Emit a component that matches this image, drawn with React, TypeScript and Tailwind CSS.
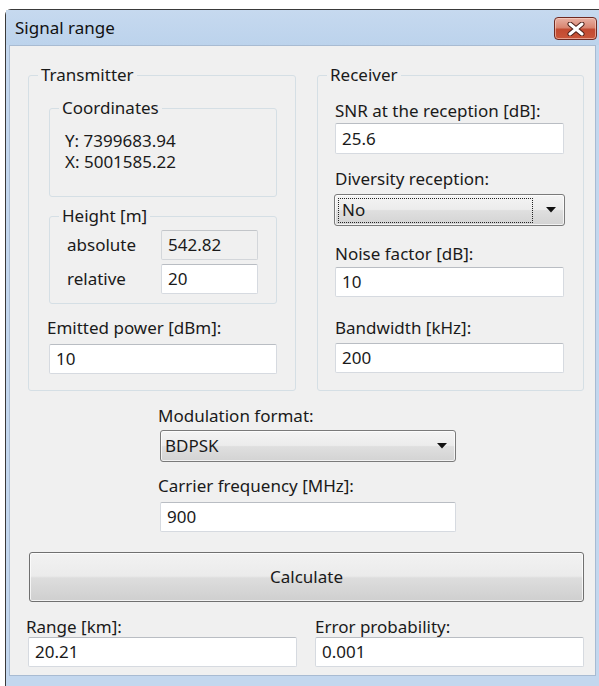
import React from "react";

type BoxProps = { value: string; className?: string };

// Win7-style edit box
function TextBox({ value, className = "" }: BoxProps) {
  return (
    <div
      className={`flex h-[30px] items-center rounded-[2px] border border-[#d6dae0] border-t-[#b9bdc3] bg-white pl-[6px] ${className}`}
    >
      {value}
    </div>
  );
}

function ReadOnlyBox({ value, className = "" }: BoxProps) {
  return (
    <div
      className={`flex h-[30px] items-center rounded-[2px] border border-[#d3d6da] border-t-[#c2c5c9] bg-[#f0f0f0] pl-[6px] ${className}`}
    >
      {value}
    </div>
  );
}

function DropArrow() {
  return (
    <svg width="10" height="6" viewBox="0 0 10 6" className="shrink-0">
      <path d="M0 0 H10 L5 5.5 Z" fill="#111" />
    </svg>
  );
}

function Combo({
  value,
  focused = false,
  className = "",
}: {
  value: string;
  focused?: boolean;
  className?: string;
}) {
  return (
    <div
      className={`flex h-[32px] items-center rounded-[3px] border border-[#7a7a7a] bg-[linear-gradient(#f4f4f4,#ececec_48%,#dfdfdf_52%,#d3d3d3)] shadow-[inset_0_0_0_1px_rgba(255,255,255,0.7)] ${className}`}
    >
      {focused ? (
        <div className="ml-[3px] flex h-[25px] w-[195px] items-center border border-dotted border-[#222] pl-[3px]">
          {value}
        </div>
      ) : (
        <div className="flex-1 pl-[4px]">{value}</div>
      )}
      <div className="ml-auto mr-[8px]">
        <DropArrow />
      </div>
    </div>
  );
}

// Group box: the padding sits on an inner wrapper so the legend keeps its own offset
function GroupBox({
  title,
  className = "",
  bodyClassName = "",
  children,
}: {
  title: string;
  className?: string;
  bodyClassName?: string;
  children: React.ReactNode;
}) {
  return (
    <fieldset className={`rounded-[3px] border border-[#d5dfe5] ${className}`}>
      <legend className="ml-[9px] px-[3px] leading-[20px]">{title}</legend>
      <div className={bodyClassName}>{children}</div>
    </fieldset>
  );
}

function Label({ text, className = "" }: { text: string; className?: string }) {
  return <div className={`leading-[20px] ${className}`}>{text}</div>;
}

function CloseButton() {
  return (
    <div className="mr-[2px] mt-[7px] flex h-[23px] w-[43px] items-center justify-center rounded-[4px] border border-[#6e2a22] bg-[linear-gradient(#e8b1a4,#d98672_45%,#c24a31_55%,#c9563a)] shadow-[inset_0_0_0_1px_rgba(255,220,210,0.55)]">
      <svg width="20" height="14" viewBox="0 0 20 14">
        <path d="M4 2 L16 12 M16 2 L4 12" stroke="#4a1f18" strokeWidth="5" strokeLinecap="round" />
        <path d="M4 2 L16 12 M16 2 L4 12" stroke="#ffffff" strokeWidth="3" strokeLinecap="round" />
      </svg>
    </div>
  );
}

export default function App() {
  return (
    <div className="h-[686px] w-[599px] overflow-hidden bg-white font-['Noto_Sans',sans-serif] text-[17px] text-[#1a1a1a]">
      <div className="ml-[5px] mt-[9px] flex h-[677px] w-[594px] flex-col rounded-tl-[6px] border-l border-t border-[#3a3a3a] bg-[#c3d7ee]">
        {/* title bar */}
        <div className="flex h-[35px] items-start bg-[linear-gradient(#c6d9ef,#bcd3ec)]">
          <div className="mt-[8px] pl-[9px] leading-[20px] text-[#111]">Signal range</div>
          <div className="ml-auto">
            <CloseButton />
          </div>
        </div>

        {/* client area */}
        <div className="mx-[3px] h-[631px] border border-[#a8bbd2] bg-[#f0f0f0]">
          <div className="ml-[18px] mt-[19px] flex gap-[21px]">
            <GroupBox title="Transmitter" className="w-[268px]" bodyClassName="pb-[16px] pl-[18px] pt-[13px]">
              <GroupBox title="Coordinates" className="ml-[2px] w-[228px]" bodyClassName="pb-[24px] pl-[15px] pt-[12px]">
                <div className="leading-[21px]">Y: 7399683.94</div>
                <div className="leading-[21px]">X: 5001585.22</div>
              </GroupBox>
              <GroupBox title="Height [m]" className="ml-[2px] mt-[9px] w-[228px]" bodyClassName="pb-[9px] pl-[17px] pt-[4px]">
                <div className="flex flex-col gap-[4px]">
                  <div className="flex items-center">
                    <div className="w-[94px]">absolute</div>
                    <ReadOnlyBox value="542.82" className="w-[97px]" />
                  </div>
                  <div className="flex items-center">
                    <div className="w-[94px]">relative</div>
                    <TextBox value="20" className="w-[97px]" />
                  </div>
                </div>
              </GroupBox>
              <Label text="Emitted power [dBm]:" className="mt-[14px]" />
              <TextBox value="10" className="ml-[2px] mt-[6px] w-[228px]" />
            </GroupBox>

            <GroupBox title="Receiver" className="w-[267px]" bodyClassName="pb-[17px] pl-[17px] pt-[16px]">
              <Label text="SNR at the reception [dB]:" />
              <TextBox value="25.6" className="mt-[2px] h-[31px] w-[229px]" />
              <Label text="Diversity reception:" className="mt-[15px]" />
              <Combo value="No" focused className="-ml-[1px] mt-[5px] w-[231px]" />
              <Label text="Noise factor [dB]:" className="mt-[18px]" />
              <TextBox value="10" className="mt-[3px] w-[229px]" />
              <Label text="Bandwidth [kHz]:" className="mt-[21px]" />
              <TextBox value="200" className="mt-[5px] w-[229px]" />
            </GroupBox>
          </div>

          <div className="ml-[148px] mt-[15px] w-[300px]">
            <Label text="Modulation format:" />
            <Combo value="BDPSK" className="ml-[2px] mt-[4px] w-[296px]" />
            <Label text="Carrier frequency [MHz]:" className="mt-[14px]" />
            <TextBox value="900" className="ml-[2px] mt-[6px] w-[296px]" />
          </div>

          <button className="ml-[19px] mt-[20px] flex h-[50px] w-[555px] items-center justify-center rounded-[3px] border border-[#707070] bg-[linear-gradient(#f2f2f2,#ebebeb_48%,#dddddd_52%,#cfcfcf)] leading-[20px] text-[#1a1a1a] shadow-[inset_0_0_0_1px_rgba(255,255,255,0.75)]">
            Calculate
          </button>

          <div className="ml-[16px] mt-[15px] flex gap-[18px]">
            <div className="w-[271px]">
              <Label text="Range [km]:" />
              <TextBox value="20.21" className="ml-[2px] w-[269px]" />
            </div>
            <div className="w-[269px]">
              <Label text="Error probability:" />
              <TextBox value="0.001" className="w-[269px]" />
            </div>
          </div>
        </div>
      </div>
    </div>
  );
}
